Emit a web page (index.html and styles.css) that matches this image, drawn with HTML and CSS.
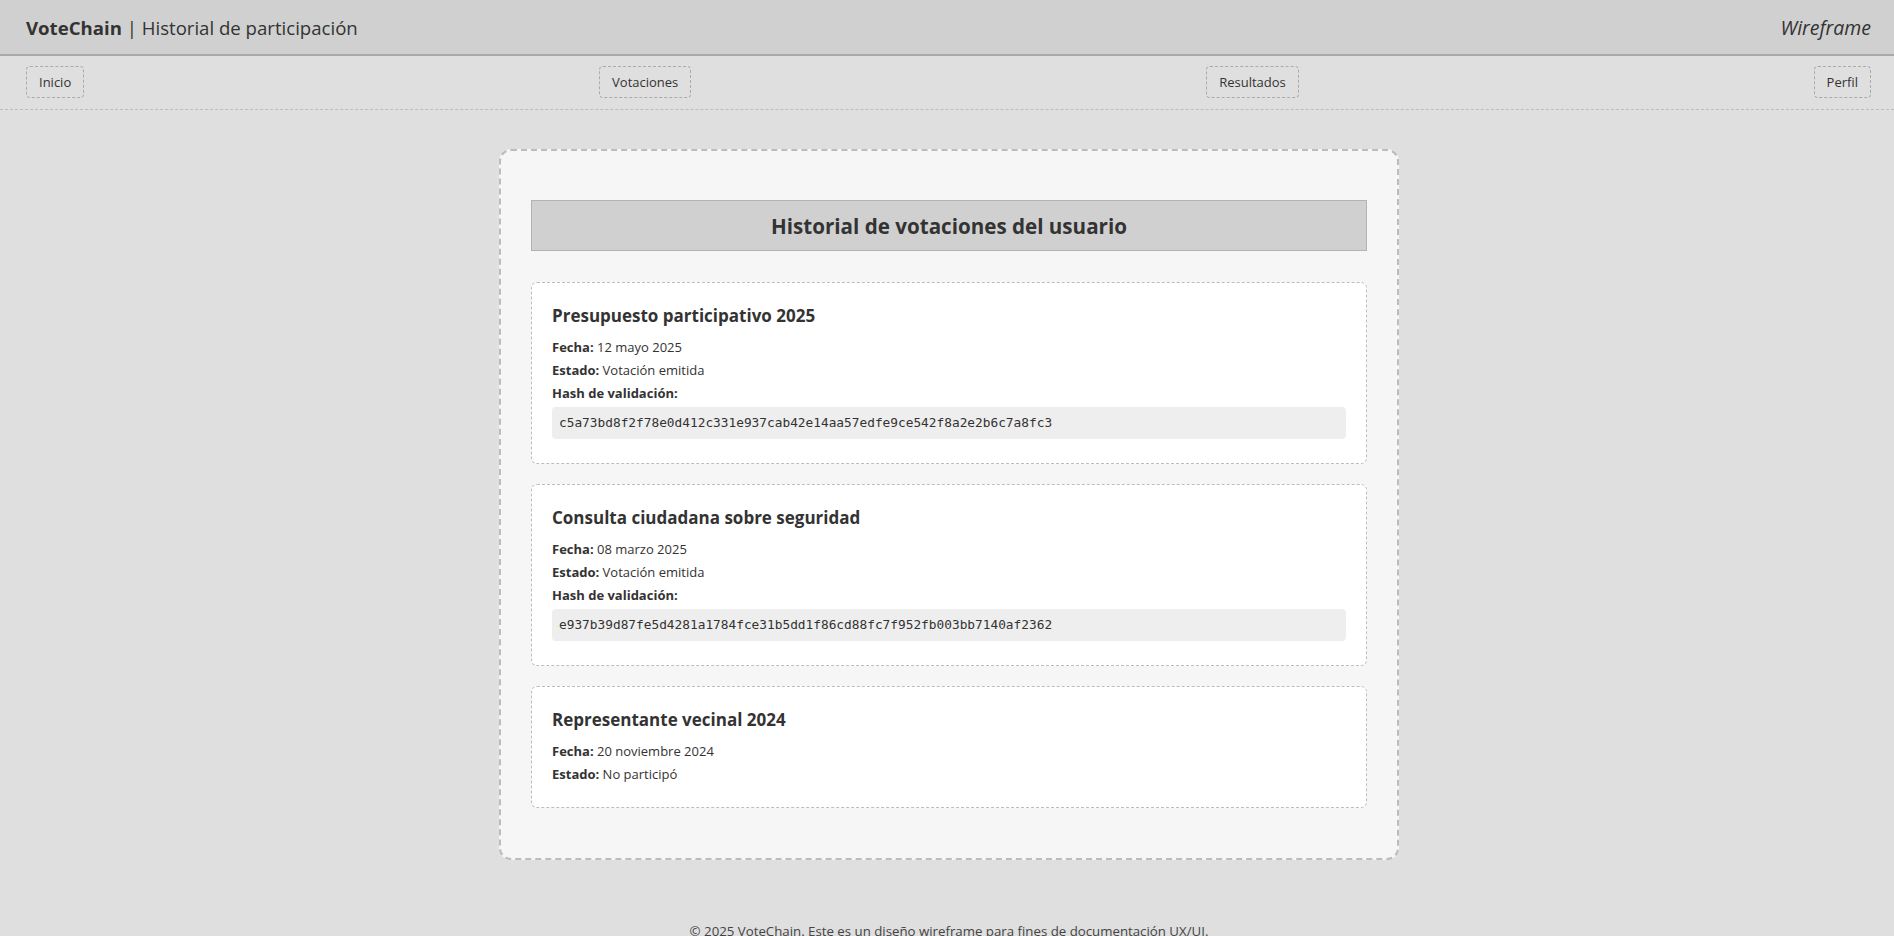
FILE: index.html
```html
<!DOCTYPE html>
<html lang="es">
<head>
<meta charset="utf-8">
<title>VoteChain | Historial de participación</title>
<link rel="stylesheet" href="styles.css">
</head>
<body>
<header class="topbar">
  <div class="brand"><strong>VoteChain</strong> | Historial de participación</div>
  <div class="tag">Wireframe</div>
</header>
<nav class="nav">
  <a class="nav-btn">Inicio</a>
  <a class="nav-btn">Votaciones</a>
  <a class="nav-btn">Resultados</a>
  <a class="nav-btn">Perfil</a>
</nav>
<div class="content">
  <main class="panel">
    <h2 class="panel-title">Historial de votaciones del usuario</h2>
    <section class="entry">
      <h3 class="entry-title">Presupuesto participativo 2025</h3>
      <p><b>Fecha:</b> 12 mayo 2025</p>
      <p><b>Estado:</b> Votación emitida</p>
      <p><b>Hash de validación:</b></p>
      <div class="hash">c5a73bd8f2f78e0d412c331e937cab42e14aa57edfe9ce542f8a2e2b6c7a8fc3</div>
    </section>
    <section class="entry">
      <h3 class="entry-title">Consulta ciudadana sobre seguridad</h3>
      <p><b>Fecha:</b> 08 marzo 2025</p>
      <p><b>Estado:</b> Votación emitida</p>
      <p><b>Hash de validación:</b></p>
      <div class="hash">e937b39d87fe5d4281a1784fce31b5dd1f86cd88fc7f952fb003bb7140af2362</div>
    </section>
    <section class="entry">
      <h3 class="entry-title">Representante vecinal 2024</h3>
      <p><b>Fecha:</b> 20 noviembre 2024</p>
      <p><b>Estado:</b> No participó</p>
    </section>
  </main>
  <footer class="footer">© 2025 VoteChain. Este es un diseño wireframe para fines de documentación UX/UI.</footer>
</div>
</body>
</html>
```
FILE: styles.css
```css
* { box-sizing: border-box; }
html, body { margin: 0; padding: 0; }
body {
  background: #dfdfdf;
  color: #333;
  font-family: "Open Sans", "Noto Sans", sans-serif;
}
.topbar {
  height: 56px;
  background: #d0d0d0;
  border-bottom: 2px solid #a9a9a9;
  display: flex;
  align-items: center;
  justify-content: space-between;
  padding: 0 23px 0 26px;
}
.brand { font-size: 18.6px; }
.brand strong { font-weight: 700; }
.tag { font-style: italic; font-size: 19.5px; }
.nav {
  display: flex;
  justify-content: space-between;
  align-items: center;
  padding: 10px 23px 11px 26px;
  border-bottom: 1px dashed #bdbdbd;
}
.nav-btn {
  display: inline-block;
  height: 32px;
  line-height: 30px;
  padding: 0 12px;
  border: 1px dashed #aaa;
  border-radius: 4px;
  font-size: 13px;
  color: #333;
}
.content { padding-left: 4px; }
.panel {
  width: 900px;
  margin: 39px auto 0;
  background: #f6f6f6;
  border: 2px dashed #bcbcbc;
  border-radius: 12px;
  padding: 49px 30px 30px;
}
.panel-title {
  margin: 0 0 31px;
  height: 51px;
  background: #d0d0d0;
  border: 1px solid #b3b3b3;
  display: flex;
  align-items: center;
  justify-content: center;
  font-size: 20.6px;
  font-weight: 700;
}
.entry {
  background: #fff;
  border: 1px dashed #bdbdbd;
  border-radius: 6px;
  padding: 21px 20px 20px;
  margin-bottom: 20px;
}
.entry-title {
  margin: 0 0 10px;
  font-size: 17px;
  line-height: 24px;
  font-weight: 700;
}
.entry p {
  margin: 0 0 5px;
  font-size: 13px;
  line-height: 18px;
}
.entry p:last-child { margin-bottom: 4px; }
.hash {
  margin: 4px 0 4px;
  background: #eee;
  border-radius: 4px;
  padding: 0 7px;
  height: 32px;
  line-height: 32px;
  font-family: "DejaVu Sans Mono", "Liberation Mono", monospace;
  font-size: 12.8px;
}
.footer {
  text-align: center;
  font-size: 13.25px;
  color: #444;
  padding: 62px 0 20px;
}
```
